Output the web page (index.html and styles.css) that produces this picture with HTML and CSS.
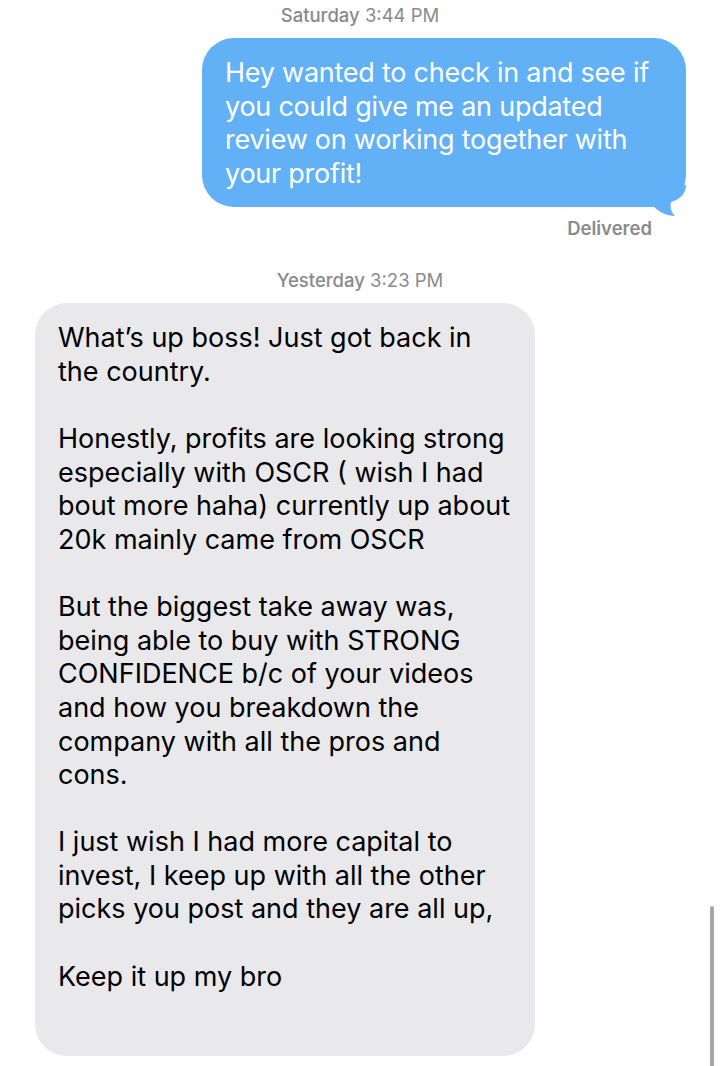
FILE: index.html
```html
<!DOCTYPE html>
<html lang="en">
<head>
  <meta charset="UTF-8" />
  <meta name="viewport" content="width=device-width, initial-scale=1" />
  <title>Messages</title>
  <link rel="stylesheet" href="styles.css">
</head>
<body>
  <div class="thread">
    <div class="stamp first"><b>Saturday</b> 3:44 PM</div>

    <div class="row out">
      <div class="bubble sent">
        Hey wanted to check in and see if<br>
        you could give me an updated<br>
        review on working together with<br>
        your profit!
        <svg class="tail" viewBox="0 0 40 32" width="40" height="32">
          <path d="M40 0 C40 9 33 15 25 17 C24 22 25 27 29 31 C21 31 13 27 8 22 L0 22 L0 0 Z" fill="#62b0f5"/>
        </svg>
      </div>
    </div>
    <div class="status">Delivered</div>

    <div class="stamp"><b>Yesterday</b> 3:23 PM</div>

    <div class="row in">
      <div class="bubble received">
        <p>What’s up boss! Just got back in<br>the country.</p>
        <p>Honestly, profits are looking strong<br>especially with OSCR ( wish I had<br>bout more haha) currently up about<br>20k mainly came from OSCR</p>
        <p>But the biggest take away was,<br>being able to buy with STRONG<br>CONFIDENCE b/c of your videos<br>and how you breakdown the<br>company with all the pros and<br>cons.</p>
        <p>I just wish I had more capital to<br>invest, I keep up with all the other<br>picks you post and they are all up,</p>
        <p>Keep it up my bro</p>
      </div>
    </div>
  </div>

  <div class="scrollbar"></div>
</body>
</html>
```

FILE: styles.css
```css
body {
  margin: 0;
  background: #ffffff;
  font-family: 'Inter', 'Noto Sans', sans-serif;
  color: #000000;
  position: relative;
  height: 1066px;
  overflow: hidden;
}
.thread {
  display: flex;
  flex-direction: column;
}
.stamp {
  text-align: center;
  font-size: 18.5px;
  line-height: 22px;
  color: #8a8a8e;
  margin-top: 30px;
}
.stamp b {
  font-weight: 500;
}
.stamp.first {
  margin-top: 4px;
}
.row {
  display: flex;
}
.row.out {
  justify-content: flex-end;
  margin-top: 12px;
  padding-right: 34px;
}
.row.in {
  margin-top: 12px;
  padding-left: 35px;
}
.bubble {
  font-size: 27px;
  line-height: 33.6px;
  border-radius: 32px;
  padding: 18px 20px 17px 23px;
  white-space: nowrap;
}
.sent {
  position: relative;
  width: 441px;
  background: #62b0f5;
  color: #ffffff;
  letter-spacing: -0.25px;
}
.tail {
  position: absolute;
  right: 0;
  bottom: -10px;
  display: block;
}
.received {
  width: 457px;
  background: #e9e9eb;
  padding-bottom: 63px;
}
.received p {
  margin: 0 0 33.6px;
}
.received p:last-child {
  margin-bottom: 0;
}
.status {
  align-self: flex-end;
  margin: 10px 68px 0 0;
  font-size: 18.5px;
  line-height: 22px;
  font-weight: 600;
  color: #8a8a8e;
}
.scrollbar {
  position: absolute;
  left: 710px;
  top: 906px;
  width: 4px;
  height: 170px;
  border-radius: 2px;
  background: #a7a7a7;
}
```
